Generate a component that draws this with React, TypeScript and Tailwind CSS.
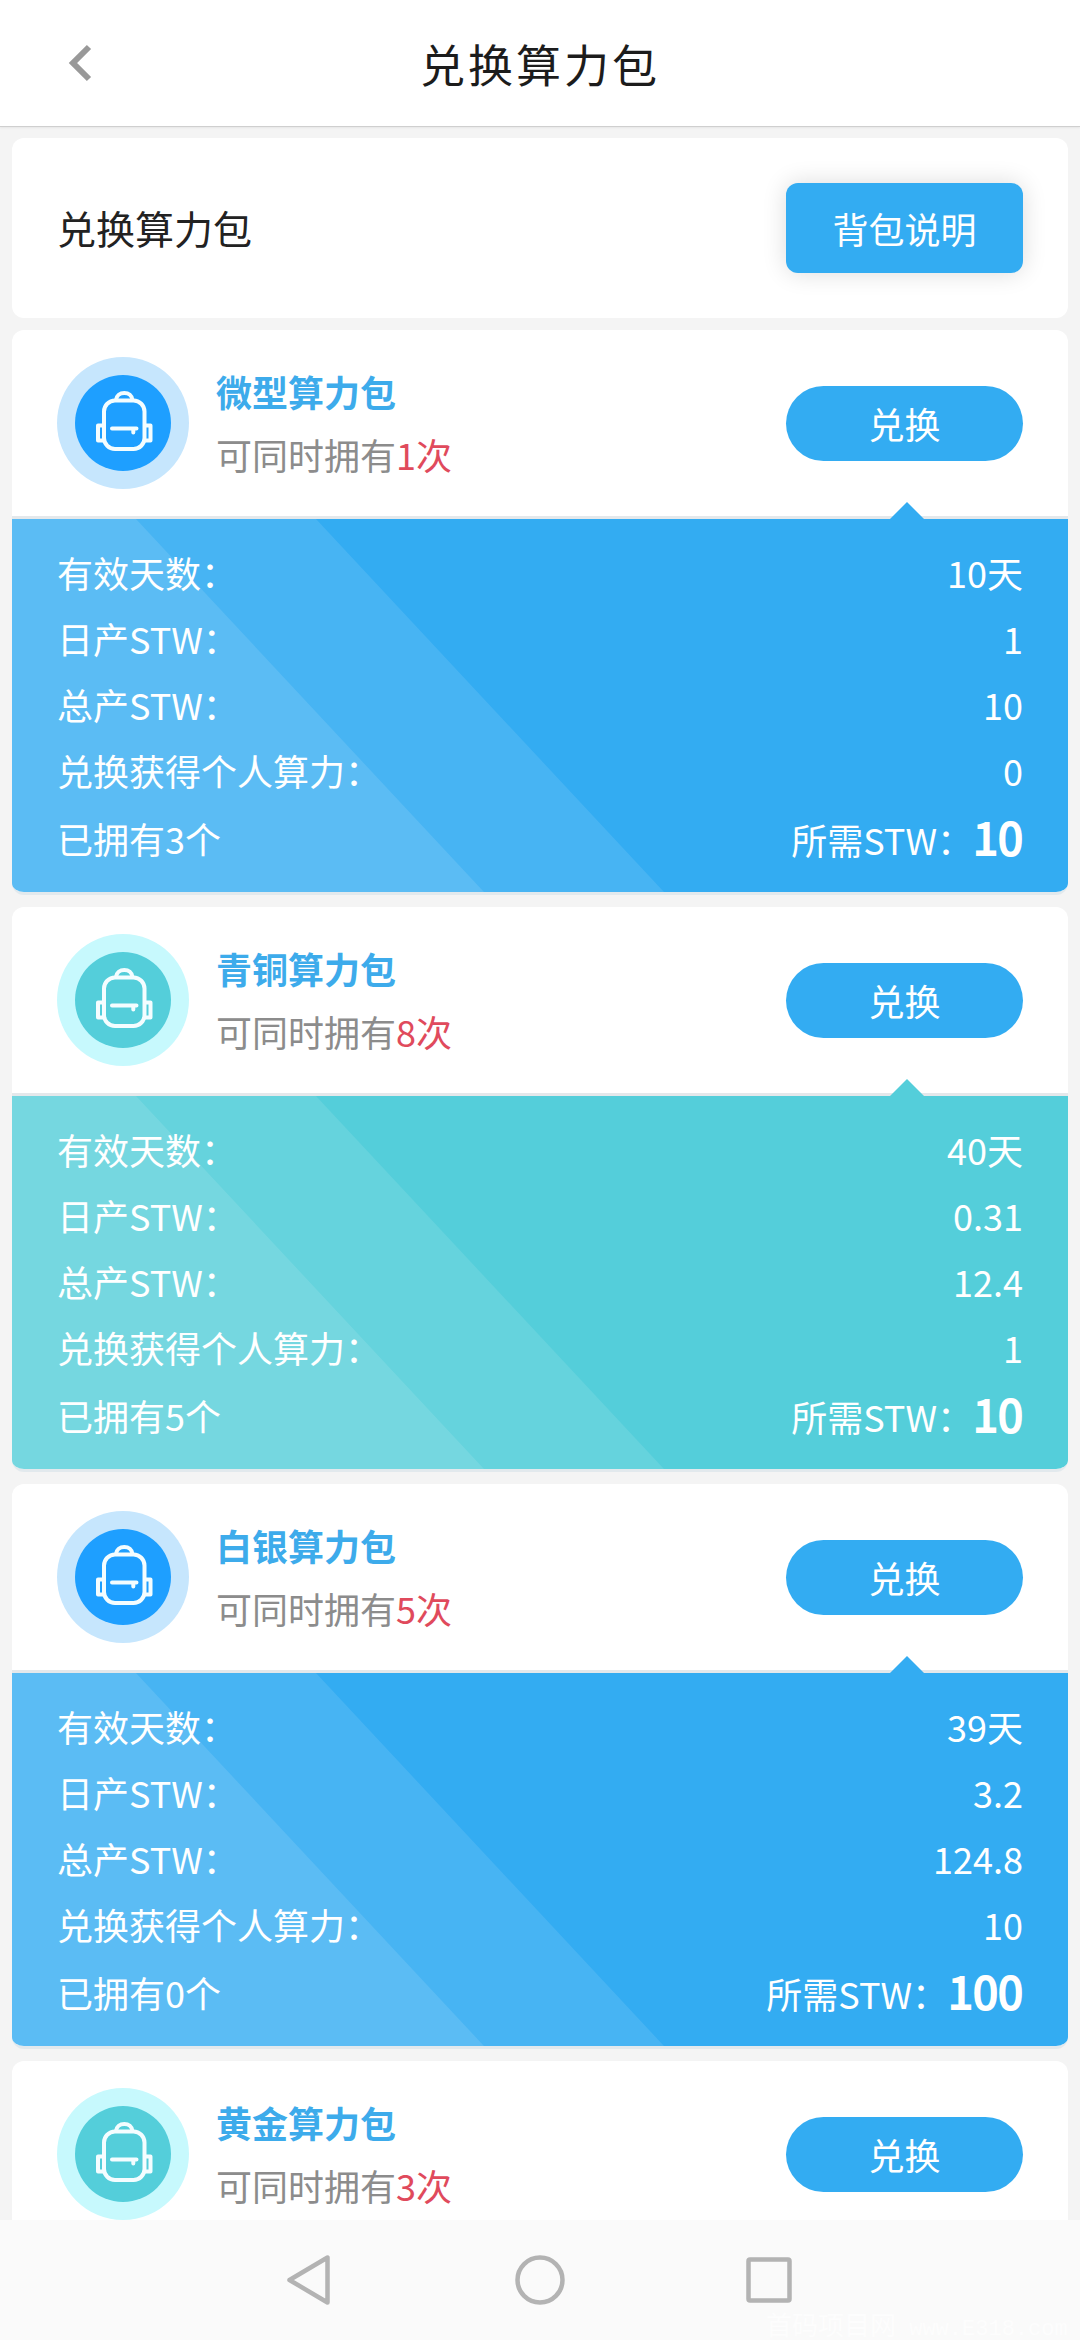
import React from 'react';

interface PackDetails {
  days: string;
  daily: string;
  total: string;
  power: string;
  owned: number;
  cost: string;
}

interface Pack {
  name: string;
  limit: number;
  theme: 'blue' | 'teal';
  details?: PackDetails;
}

const packs: Pack[] = [
  {
    name: '微型算力包',
    limit: 1,
    theme: 'blue',
    details: { days: '10天', daily: '1', total: '10', power: '0', owned: 3, cost: '10' },
  },
  {
    name: '青铜算力包',
    limit: 8,
    theme: 'teal',
    details: { days: '40天', daily: '0.31', total: '12.4', power: '1', owned: 5, cost: '10' },
  },
  {
    name: '白银算力包',
    limit: 5,
    theme: 'blue',
    details: { days: '39天', daily: '3.2', total: '124.8', power: '10', owned: 0, cost: '100' },
  },
  { name: '黄金算力包', limit: 3, theme: 'teal' },
];

const themes = {
  blue: { panel: 'bg-[#33acf2]', arrow: 'fill-[#33acf2]', ring: 'bg-[#c6e6fd]', disc: 'bg-[#1e9fff]' },
  teal: { panel: 'bg-[#54ceda]', arrow: 'fill-[#54ceda]', ring: 'bg-[#c7f9fd]', disc: 'bg-[#54ceda]' },
};

const BackpackIcon: React.FC = () => (
  <svg className="w-24 h-24" viewBox="0 0 96 96" fill="none" stroke="#f4fdff" strokeWidth="4" strokeLinejoin="round">
    <path d="M41 25C41.500 20.500 45 18 49.300 18S57 20.500 57.500 25" />
    <rect x="29" y="25.500" width="40.500" height="48.500" rx="11" />
    <path d="M29 50.500H23V65.500H29M69.500 50.500H75.500V65.500H69.500" />
    <path d="M37 53.500H61.500M58.300 54V57.500" strokeLinecap="round" />
  </svg>
);

const InfoRow: React.FC<{ label: string; value: string }> = ({ label, value }) => (
  <div className="flex justify-between h-[66px] items-center">
    <span>{label}</span>
    <span>{value}</span>
  </div>
);

const PackCard: React.FC<{ pack: Pack }> = ({ pack }) => {
  const theme = themes[pack.theme];
  const details = pack.details;

  return (
    <section className="bg-white rounded-xl overflow-hidden border-b-[3px] border-[#e2e9ed] shrink-0">
      {/* En-tête du pack */}
      <div className="flex items-center h-[186px] px-[45px]">
        <div className={`w-[132px] h-[132px] rounded-full flex items-center justify-center ${theme.ring}`}>
          <div className={`w-24 h-24 rounded-full ${theme.disc}`}>
            <BackpackIcon />
          </div>
        </div>
        <div className="ml-[27px] flex-1 pb-0.5">
          <h2 className="text-[36px] leading-[64px] font-bold text-[#3dabeb]">{pack.name}</h2>
          <p className="text-[36px] leading-[63px] text-[#8c8c8c]">
            可同时拥有<span className="text-[#e04a5c]">{pack.limit}次</span>
          </p>
        </div>
        <button className="w-[237px] h-[75px] rounded-full bg-[#33acf2] text-white text-[36px] leading-none">兑换</button>
      </div>

      {/* Détails */}
      {details && (
        <div className={`relative border-t-[3px] border-[#e4e8eb] h-[376px] ${theme.panel} bg-clip-padding`}>
          <svg className="absolute left-0 top-0 w-[1056px] h-[373px]" viewBox="0 0 1056 373">
            <path d="M0 0H304L652 373H0Z" fill="#fff" fillOpacity=".1" />
            <path d="M0 0H124L472 373H0Z" fill="#fff" fillOpacity=".11" />
          </svg>
          <svg className="absolute right-[143px] -top-[17px] w-9 h-[17px]" viewBox="0 0 36 17">
            <path d="M18 0L35 17H1Z" className={theme.arrow} />
          </svg>
          <div className="relative px-[45px] pt-5 text-white text-[36px] leading-none">
            <InfoRow label="有效天数：" value={details.days} />
            <InfoRow label="日产STW：" value={details.daily} />
            <InfoRow label="总产STW：" value={details.total} />
            <InfoRow label="兑换获得个人算力：" value={details.power} />
            <div className="flex justify-between items-start">
              <span className="pt-[17px]">已拥有{details.owned}个</span>
              <span className="pt-2.5">
                所需STW：
                <span className="text-[45px] leading-none [-webkit-text-stroke:2px_white]">{details.cost}</span>
              </span>
            </div>
          </div>
        </div>
      )}
    </section>
  );
};

const App: React.FC = () => {
  return (
    <div className="w-[1080px] h-[2340px] flex flex-col overflow-hidden bg-[#f4f4f4] font-['Noto_Sans_CJK_SC',sans-serif]">
      <header className="h-[127px] shrink-0 bg-white border-b border-[#cfcfcf] shadow-[0_1px_2px_rgba(0,0,0,0.06)] grid grid-cols-3 items-center">
        <svg className="ml-[68px] w-6 h-[38px]" viewBox="0 0 24 38" fill="none" stroke="#999" strokeWidth="6">
          <path d="M21 3L5 19L21 35" />
        </svg>
        <h1 className="text-[45px] leading-[60px] tracking-[3px] text-[#1c1c1c] text-center pt-0.5">兑换算力包</h1>
      </header>

      <main className="flex-1 min-h-0 overflow-hidden flex flex-col gap-3 px-3 pt-[11px]">
        <section className="shrink-0 h-[180px] bg-white rounded-xl flex items-center justify-between px-[45px]">
          <span className="text-[39px] text-[#222] pb-0.5">兑换算力包</span>
          <button className="w-[237px] h-[90px] rounded-xl bg-[#33acf2] text-white text-[36px] shadow-[0_0_24px_rgba(0,0,0,0.14)]">
            背包说明
          </button>
        </section>
        {packs.map((pack) => (
          <PackCard key={pack.name} pack={pack} />
        ))}
      </main>

      {/* Barre de navigation système */}
      <nav className="relative h-[120px] shrink-0 bg-[#fafafa]">
        <svg className="w-[1080px] h-[120px]" viewBox="0 0 1080 120" fill="none" stroke="#b3b3b3" strokeWidth="4.500" strokeLinejoin="round">
          <path d="M289.500 60L327.500 37.500V82.500Z" />
          <circle cx="540" cy="60" r="22.500" />
          <rect x="748.500" y="39.500" width="41" height="41" rx="1.500" />
        </svg>
        <span className="absolute left-[766px] top-[91px] text-[26px] leading-[26px] text-[#fdfdfd] whitespace-pre">
          首码项目网<span className="font-['Liberation_Mono',monospace] text-[22px]"> www.E318.com</span>
        </span>
      </nav>
    </div>
  );
};

export default App;
